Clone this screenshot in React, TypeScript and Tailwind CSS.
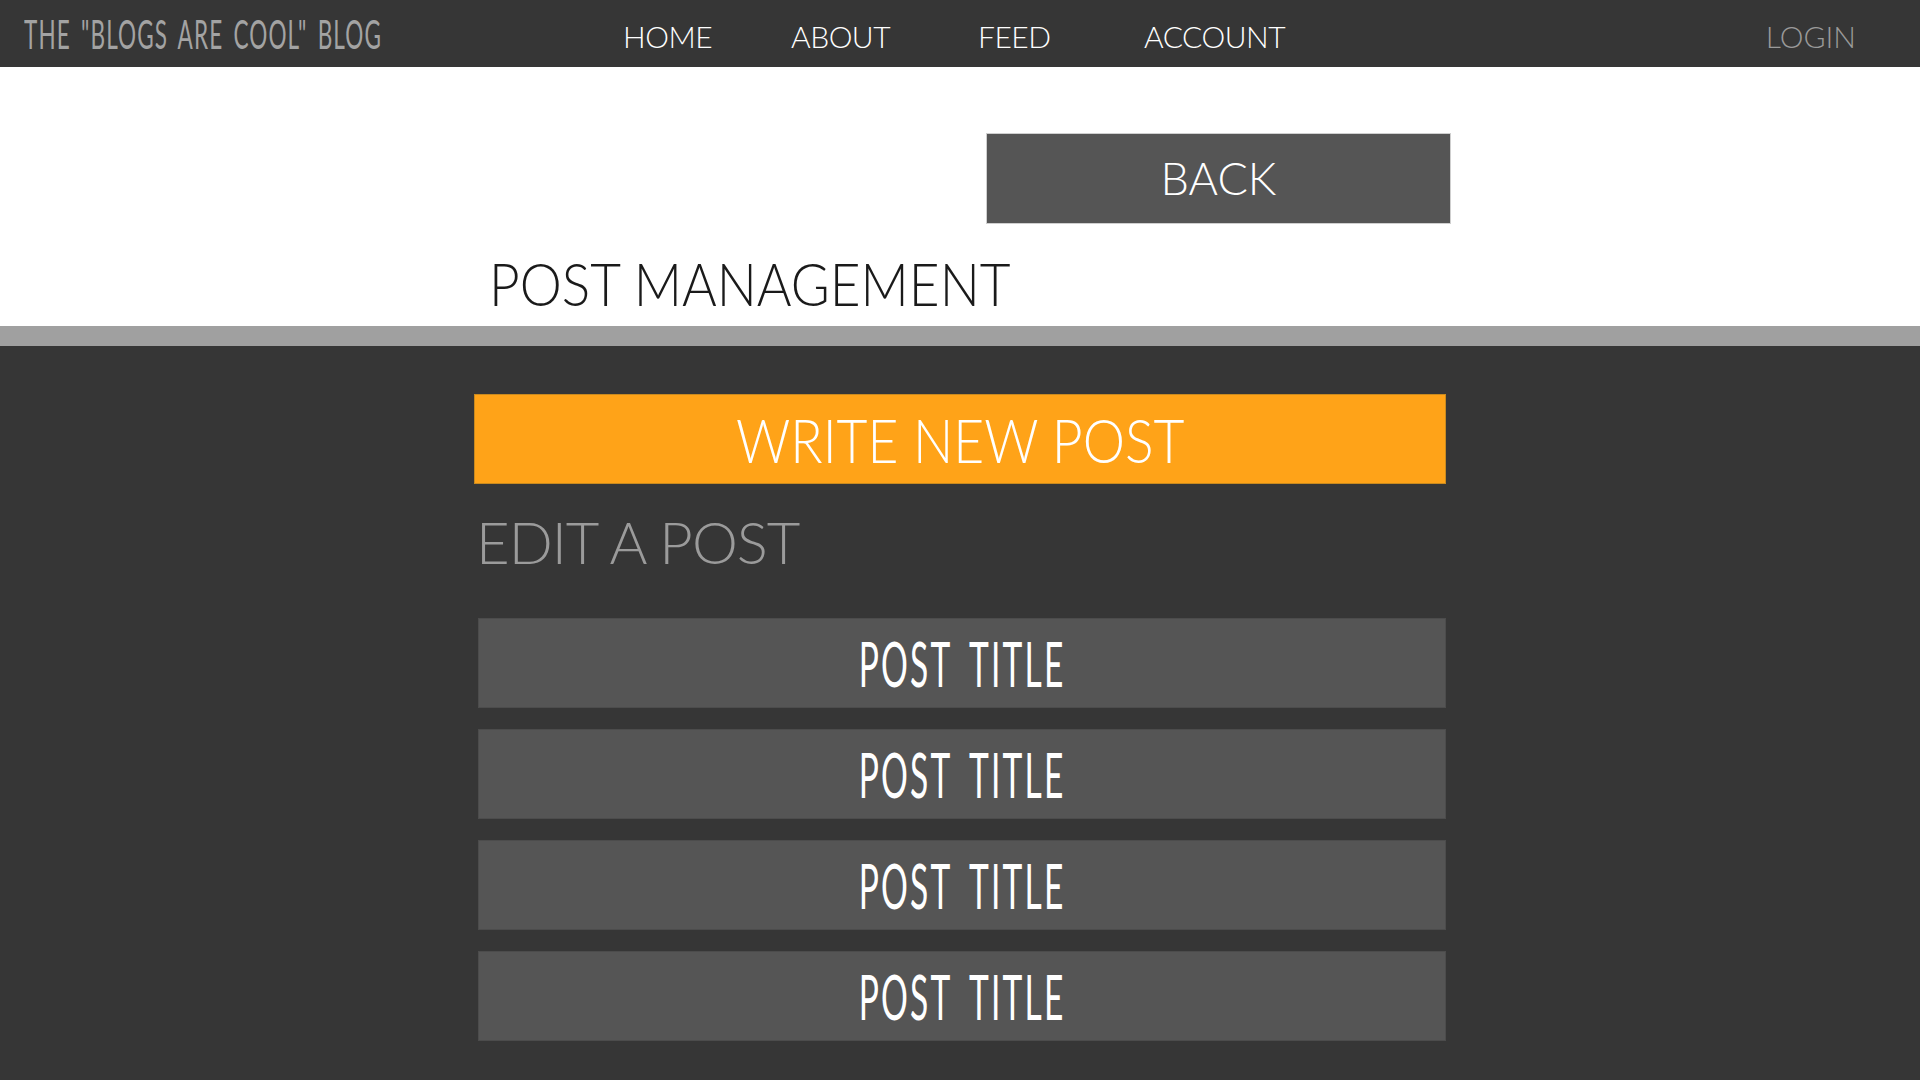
import React from 'react';

const posts = ['POST TITLE', 'POST TITLE', 'POST TITLE', 'POST TITLE'];

const navLinks = [
  { label: 'HOME', w: 'w-[168px]' },
  { label: 'ABOUT', w: 'w-[187px]' },
  { label: 'FEED', w: 'w-[166px]' },
  { label: 'ACCOUNT', w: 'w-[160px]' },
];

export default function App() {
  return (
    <div className="min-h-screen w-full bg-[#363636] font-['Lato',sans-serif]">
      {/* Top bar */}
      <header className="flex h-[67px] items-center bg-[#363636] pl-[24px] pr-[64px]">
        <div className="w-[599px] whitespace-nowrap">
          <span className="inline-block origin-left scale-x-[0.55] text-[41px] font-normal leading-none tracking-[2px] text-[#a3a3a3] [word-spacing:6px]">
            THE &quot;BLOGS ARE COOL&quot; BLOG
          </span>
        </div>
        <nav className="flex pt-[4px]">
          {navLinks.map((l) => (
            <a key={l.label} href="#" className={`${l.w} text-left text-[30px] font-light leading-none tracking-[-0.5px] text-white`}>
              {l.label}
            </a>
          ))}
        </nav>
        <a href="#" className="ml-auto pt-[4px] text-[30px] font-light leading-none text-[#9a9a9a]">
          LOGIN
        </a>
      </header>

      {/* White header area */}
      <section className="h-[259px] bg-white">
        <div className="mx-auto w-[972px] pt-[66px]">
          <button className="ml-[512px] flex h-[91px] w-[465px] items-center justify-center border border-[#cfcfcf] bg-[#555555] text-[45px] font-light leading-none text-white">
            BACK
          </button>
          <h1 className="mt-[30px] whitespace-nowrap pl-[15px] text-[59px] font-light leading-none text-[#1a1a1a]">
            <span className="inline-block origin-left scale-x-[0.9]">POST MANAGEMENT</span>
          </h1>
        </div>
      </section>
      <div className="h-[20px] bg-[#a0a0a0]" />

      {/* Dark content */}
      <main className="mx-auto w-[972px] pt-[48px]">
        <button className="flex h-[90px] w-full items-center justify-center whitespace-nowrap border border-[#c98a1f] bg-[#ffa318] text-[61px] font-light leading-none text-white">
          <span className="inline-block scale-x-[0.875]">WRITE NEW POST</span>
        </button>
        <h2 className="mt-[29px] pl-[2px] text-[58px] font-light leading-none tracking-[-1px] text-[#9b9b9b]">
          EDIT A POST
        </h2>
        <ul className="mt-[47px] flex flex-col gap-[21px] pb-[39px] pl-[4px]">
          {posts.map((p, i) => (
            <li key={i}>
              <a href="#" className="flex h-[90px] w-[968px] items-center justify-center border border-[#4c4c4c] bg-[#555555]">
                <span className="inline-block scale-x-[0.55] text-[61px] font-normal leading-none tracking-[4px] text-white [word-spacing:14px]">
                  {p}
                </span>
              </a>
            </li>
          ))}
        </ul>
      </main>
    </div>
  );
}
